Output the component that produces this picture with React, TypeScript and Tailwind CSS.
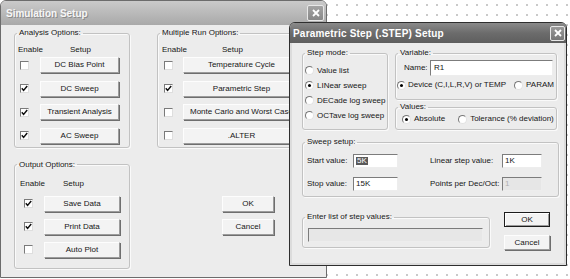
import React from "react";
import clsx from "clsx";

type P = { children?: React.ReactNode; className?: string };

function Group({ title, className, children }: P & { title: string }) {
  return (
    <fieldset
      className={clsx(
        "rounded-[3px] border border-[#c2c2c2] shadow-[inset_1px_1px_0_#fafafa,1px_1px_0_#fafafa]",
        className
      )}
    >
      <legend className="ml-[2px] px-[2px] leading-[10px]">{title}</legend>
      {children}
    </fieldset>
  );
}

function Btn({ children, className, def }: P & { def?: boolean }) {
  return (
    <div
      className={clsx(
        "flex shrink-0 items-center justify-center bg-[#f3f3f3] leading-none",
        def
          ? "border border-[#1c1c1c] shadow-[inset_1px_1px_0_#fff,inset_-1px_-1px_0_#9a9a9a]"
          : "border border-[#fdfdfd] border-r-[#9c9c9c] border-b-[#9c9c9c] shadow-[1px_1px_0_#6e6e6e]",
        className
      )}
    >
      {children}
    </div>
  );
}

function Check({ on }: { on?: boolean }) {
  return (
    <span className="flex h-[9px] w-[9px] shrink-0 items-center justify-center border border-[#7a7a7a] border-r-[#dedede] border-b-[#dedede] bg-white">
      {on && (
        <svg width="7" height="7" viewBox="0 0 7 7">
          <path d="M0.8 3.2 L2.6 5.4 L6.2 1" stroke="#111" strokeWidth="1.5" fill="none" />
        </svg>
      )}
    </span>
  );
}

function Radio({ on }: { on?: boolean }) {
  return (
    <span className="flex h-[9px] w-[9px] shrink-0 items-center justify-center rounded-full border border-[#777] border-r-[#e2e2e2] border-b-[#e2e2e2] bg-white">
      {on && <span className="h-[3px] w-[3px] rounded-full bg-black" />}
    </span>
  );
}

function CloseX({ className }: { className?: string }) {
  return (
    <div
      className={clsx(
        "flex items-center justify-center rounded-[2px] border border-[#e8e8e8]",
        className
      )}
    >
      <svg width="8" height="8" viewBox="0 0 8 8">
        <path d="M1 1 L7 7 M7 1 L1 7" stroke="#fff" strokeWidth="1.8" />
      </svg>
    </div>
  );
}

function Field({ children, className }: P) {
  return (
    <div
      className={clsx(
        "flex items-center border border-[#7c7c7c] border-r-[#ededed] border-b-[#ededed] pl-[2px] leading-none",
        className
      )}
    >
      {children}
    </div>
  );
}

const analysis = [
  ["DC Bias Point", false],
  ["DC Sweep", true],
  ["Transient Analysis", true],
  ["AC Sweep", true],
] as const;

const multiRun = [
  ["Temperature Cycle", false],
  ["Parametric Step", true],
  ["Monte Carlo and Worst Case", false],
  [".ALTER", false],
] as const;

const output = [
  ["Save Data", true],
  ["Print Data", true],
  ["Auto Plot", false],
] as const;

function SimulationSetup() {
  return (
    <div className="absolute left-0 top-0 flex h-[278px] w-[327px] flex-col overflow-hidden rounded-t-[6px] border border-[#6c6c6c] bg-[#ececec]">
      <div className="flex h-[24px] shrink-0 items-center justify-between bg-gradient-to-b from-[#cacaca] to-[#a9a9a9] pl-[5px] pr-[2px]">
        <span className="text-[10px] font-bold text-[#f6f6f6] [text-shadow:1px_1px_0_#8a8a8a]">
          Simulation Setup
        </span>
        <CloseX className="h-[16px] w-[17px] bg-gradient-to-b from-[#a4a4a4] to-[#888]" />
      </div>

      <div className="flex flex-col pl-[13px] pt-[3px]">
        <div className="flex items-start">
          <Group title="Analysis Options:" className="w-[116px] pb-[3px]">
            <div className="flex h-[10px] items-center pl-[3px] pt-0 mt-[7px]">
              <span className="w-[52px]">Enable</span>
              <span>Setup</span>
            </div>
            <div className="mt-[2px] flex flex-col gap-[7.5px] pl-[5px]">
              {analysis.map(([label, on]) => (
                <div key={label} className="flex h-[16px] items-center">
                  <div className="w-[20px]">
                    <Check on={on} />
                  </div>
                  <Btn className="h-[16px] w-[79px]">{label}</Btn>
                </div>
              ))}
            </div>
          </Group>

          <Group title="Multiple Run Options:" className="ml-[27px] w-[156px] pb-[3px]">
            <div className="mt-[7px] flex h-[10px] items-center pl-[4px]">
              <span className="w-[60px]">Enable</span>
              <span>Setup</span>
            </div>
            <div className="mt-[2px] flex flex-col gap-[7.5px] pl-[6px]">
              {multiRun.map(([label, on]) => (
                <div key={label} className="flex h-[16px] items-center">
                  <div className="w-[19px]">
                    <Check on={on} />
                  </div>
                  <Btn className="h-[16px] w-[117px] whitespace-nowrap">{label}</Btn>
                </div>
              ))}
            </div>
          </Group>
        </div>

        <div className="mt-[12px] flex items-start">
          <Group title="Output Options:" className="w-[116px] pb-[10px]">
            <div className="mt-[9px] flex h-[10px] items-center pl-[5px]">
              <span className="w-[43px]">Enable</span>
              <span>Setup</span>
            </div>
            <div className="mt-[7px] flex flex-col gap-[7px] pl-[9px]">
              {output.map(([label, on]) => (
                <div key={label} className="flex h-[16px] items-center">
                  <div className="w-[20px]">
                    <Check on={on} />
                  </div>
                  <Btn className="h-[16px] w-[76px]">{label}</Btn>
                </div>
              ))}
            </div>
          </Group>

          <div className="ml-[92px] mt-[36px] flex flex-col gap-[7px]">
            <Btn className="h-[16px] w-[52px]">OK</Btn>
            <Btn className="h-[16px] w-[52px]">Cancel</Btn>
          </div>
        </div>
      </div>
    </div>
  );
}

function StepSetup() {
  return (
    <div className="absolute left-[289px] top-[22px] flex h-[244px] w-[278px] flex-col overflow-hidden rounded-t-[6px] border border-[#2e2e2e] bg-[#ececec] shadow-[inset_0_0_0_2px_#dcdcdc]">
      <div className="flex h-[20px] shrink-0 items-center justify-between bg-gradient-to-b from-[#8a8a8a] via-[#6c6c6c] to-[#5e5e5e] pl-[3px] pr-[1px]">
        <span className="text-[10px] font-bold tracking-[0.2px] text-white">
          Parametric Step (.STEP) Setup
        </span>
        <CloseX className="h-[15px] w-[15px] bg-gradient-to-b from-[#9a9a9a] to-[#777]" />
      </div>

      <div className="flex flex-col pl-[12px] pt-[5px]">
        <div className="flex items-start">
          <Group title="Step mode:" className="w-[86px] pb-[6px]">
            <div className="flex flex-col pl-[2px] pt-[5px]">
              {[
                ["Value list", false],
                ["LINear sweep", true],
                ["DECade log sweep", false],
                ["OCTave log sweep", false],
              ].map(([label, on]) => (
                <div key={label as string} className="flex h-[15px] items-center gap-[3px] whitespace-nowrap">
                  <Radio on={on as boolean} />
                  <span>{label}</span>
                </div>
              ))}
            </div>
          </Group>

          <div className="ml-[7px] flex flex-col">
            <Group title="Variable:" className="w-[162px] pb-[8px]">
              <div className="flex items-center pl-[8px] pt-[2px]">
                <span className="w-[26px]">Name:</span>
                <Field className="h-[16px] w-[123px] bg-white pl-[3px]">R1</Field>
              </div>
              <div className="mt-[3px] flex h-[12px] items-center whitespace-nowrap pl-[1px]">
                <Radio on />
                <span className="ml-[2px]">Device (C,I,L,R,V) or TEMP</span>
                <span className="ml-[8px]">
                  <Radio />
                </span>
                <span className="ml-[3px]">PARAM</span>
              </div>
            </Group>

            <Group title="Values:" className="mt-[2px] w-[162px] pb-[4px]">
              <div className="mt-[1px] flex h-[12px] items-center whitespace-nowrap pl-[6px]">
                <Radio on />
                <span className="ml-[3px]">Absolute</span>
                <span className="ml-[13px]">
                  <Radio />
                </span>
                <span className="ml-[3px]">Tolerance (% deviation)</span>
              </div>
            </Group>
          </div>
        </div>

        <Group title="Sweep setup:" className="mt-[7px] w-[257px] pb-[5px]">
          <div className="grid grid-cols-[46px_45px_32px_72px_40px] items-center gap-y-[9px] whitespace-nowrap pl-[4px] pt-[7px]">
            <span>Start value:</span>
            <Field className="h-[14px] bg-white">
              <span className="bg-[#5a5a5a] px-[1px] text-white">5K</span>
            </Field>
            <span />
            <span>Linear step value:</span>
            <Field className="h-[14px] bg-white">1K</Field>

            <span>Stop value:</span>
            <Field className="h-[14px] bg-white">15K</Field>
            <span />
            <span>Points per Dec/Oct:</span>
            <Field className="h-[14px] bg-[#e6e6e6] text-[#b0b0b0]">1</Field>
          </div>
        </Group>

        <div className="mt-[15px] flex items-start">
          <Group title="Enter list of step values:" className="w-[188px] pb-[5px]">
            <div className="px-[5px] pt-[6px]">
              <Field className="h-[14px] w-[175px] bg-[#e7e7e7]" />
            </div>
          </Group>
          <div className="ml-[14px] flex flex-col gap-[8px]">
            <Btn def className="h-[15px] w-[46px]">OK</Btn>
            <Btn className="h-[15px] w-[46px]">Cancel</Btn>
          </div>
        </div>
      </div>
    </div>
  );
}

export default function App() {
  return (
    <div className="relative h-[279px] w-[570px] overflow-hidden bg-white bg-[radial-gradient(circle,#c8c8c8_0.7px,transparent_1px)] bg-[size:10px_10px] bg-[position:2px_0px] font-['Liberation_Sans',Arial,sans-serif] text-[8px] text-[#161616]">
      <SimulationSetup />
      <StepSetup />
    </div>
  );
}
